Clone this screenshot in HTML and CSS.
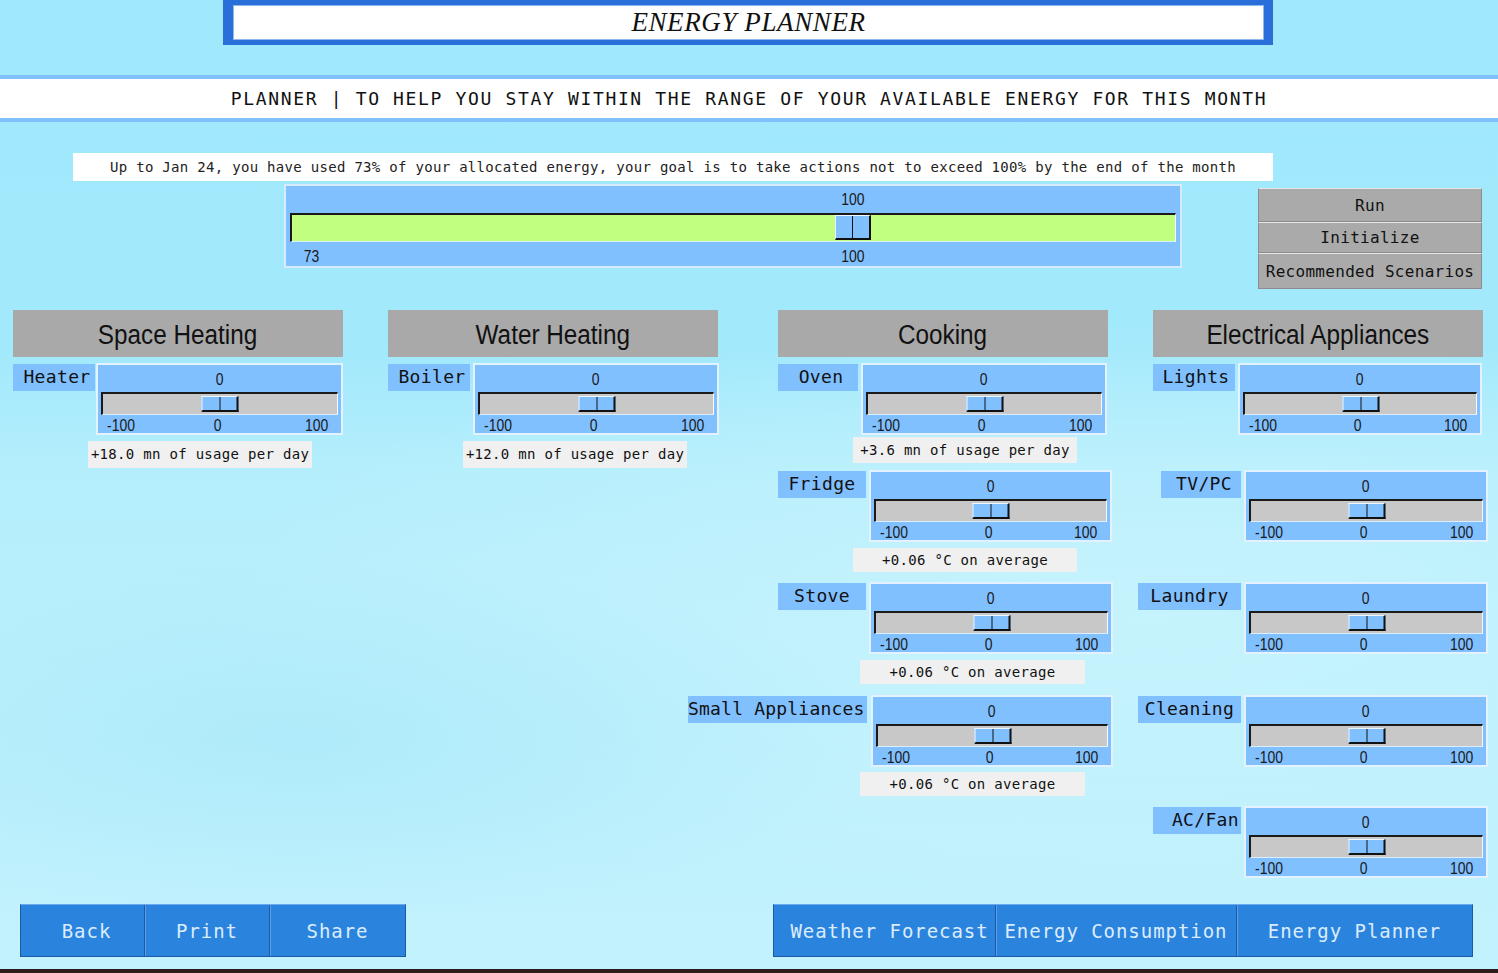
FILE: index.html
```html
<!DOCTYPE html>
<html lang="en">
<head>
<meta charset="utf-8">
<title>Energy Planner</title>
<link rel="stylesheet" href="styles.css">
</head>
<body>
<div class="page">
  <header class="title-frame">
    <div class="title-inner"><h1 class="title">ENERGY PLANNER</h1></div>
  </header>

  <div class="subtitle">PLANNER | TO HELP YOU STAY WITHIN THE RANGE OF YOUR AVAILABLE ENERGY FOR THIS MONTH</div>

  <div class="info">Up to Jan 24, you have used 73% of your allocated energy, your goal is to take actions not to exceed 100% by the end of the month</div>

  <div class="control-row">
    <div class="main-slider">
      <div class="ms-line"><span class="ms-mark" style="left:63.5%"><span class="num">100</span></span></div>
      <div class="track track-main"><span class="thumb thumb-main" style="left:63.5%"></span></div>
      <div class="ms-line ms-scale"><span class="ms-start"><span class="num">73</span></span><span class="ms-mark" style="left:63.5%"><span class="num">100</span></span></div>
    </div>
    <div class="actions">
      <button class="act act-run">Run</button>
      <button class="act act-init">Initialize</button>
      <button class="act act-rec">Recommended Scenarios</button>
    </div>
  </div>

  <div class="categories">
    <section class="cat cat-space">
      <h2 class="cat-head"><span>Space Heating</span></h2>
      <div class="item item-first">
        <div class="row">
          <div class="label lbl-heater">Heater</div>
          <div class="slider w247">
            <div class="s-value"><span class="num">0</span></div>
            <div class="track"><span class="thumb"></span></div>
            <div class="s-scale"><span class="num">-100</span><span class="num">0</span><span class="num">100</span></div>
          </div>
        </div>
        <div class="note note-a">+18.0 mn of usage per day</div>
      </div>
    </section>

    <section class="cat cat-water">
      <h2 class="cat-head"><span>Water Heating</span></h2>
      <div class="item item-first">
        <div class="row">
          <div class="label lbl-boiler">Boiler</div>
          <div class="slider w246">
            <div class="s-value"><span class="num">0</span></div>
            <div class="track"><span class="thumb"></span></div>
            <div class="s-scale"><span class="num">-100</span><span class="num">0</span><span class="num">100</span></div>
          </div>
        </div>
        <div class="note note-a">+12.0 mn of usage per day</div>
      </div>
    </section>

    <section class="cat cat-cook">
      <h2 class="cat-head"><span>Cooking</span></h2>
      <div class="item item-first">
        <div class="row">
          <div class="label lbl-oven">Oven</div>
          <div class="slider w246">
            <div class="s-value"><span class="num">0</span></div>
            <div class="track"><span class="thumb"></span></div>
            <div class="s-scale"><span class="num">-100</span><span class="num">0</span><span class="num">100</span></div>
          </div>
        </div>
        <div class="note note-oven">+3.6 mn of usage per day</div>
      </div>
      <div class="item item-fridge">
        <div class="row">
          <div class="label lbl-fridge">Fridge</div>
          <div class="slider w243">
            <div class="s-value"><span class="num">0</span></div>
            <div class="track"><span class="thumb"></span></div>
            <div class="s-scale"><span class="num">-100</span><span class="num">0</span><span class="num">100</span></div>
          </div>
        </div>
        <div class="note note-fridge">+0.06 °C on average</div>
      </div>
      <div class="item item-stove">
        <div class="row">
          <div class="label lbl-fridge">Stove</div>
          <div class="slider w244">
            <div class="s-value"><span class="num">0</span></div>
            <div class="track"><span class="thumb"></span></div>
            <div class="s-scale"><span class="num">-100</span><span class="num">0</span><span class="num">100</span></div>
          </div>
        </div>
        <div class="note note-stove">+0.06 °C on average</div>
      </div>
      <div class="item item-small">
        <div class="row">
          <div class="label lbl-small">Small Appliances</div>
          <div class="slider w242">
            <div class="s-value"><span class="num">0</span></div>
            <div class="track"><span class="thumb"></span></div>
            <div class="s-scale"><span class="num">-100</span><span class="num">0</span><span class="num">100</span></div>
          </div>
        </div>
        <div class="note note-small">+0.06 °C on average</div>
      </div>
    </section>

    <section class="cat cat-elec">
      <h2 class="cat-head"><span>Electrical Appliances</span></h2>
      <div class="item item-first">
        <div class="row">
          <div class="label lbl-lights">Lights</div>
          <div class="slider w244">
            <div class="s-value"><span class="num">0</span></div>
            <div class="track"><span class="thumb"></span></div>
            <div class="s-scale"><span class="num">-100</span><span class="num">0</span><span class="num">100</span></div>
          </div>
        </div>
      </div>
      <div class="item item-e2">
        <div class="row">
          <div class="label lbl-tv">TV/PC</div>
          <div class="slider w244">
            <div class="s-value"><span class="num">0</span></div>
            <div class="track"><span class="thumb"></span></div>
            <div class="s-scale"><span class="num">-100</span><span class="num">0</span><span class="num">100</span></div>
          </div>
        </div>
      </div>
      <div class="item item-e3">
        <div class="row">
          <div class="label lbl-laundry">Laundry</div>
          <div class="slider w244">
            <div class="s-value"><span class="num">0</span></div>
            <div class="track"><span class="thumb"></span></div>
            <div class="s-scale"><span class="num">-100</span><span class="num">0</span><span class="num">100</span></div>
          </div>
        </div>
      </div>
      <div class="item item-e4">
        <div class="row">
          <div class="label lbl-laundry">Cleaning</div>
          <div class="slider w244">
            <div class="s-value"><span class="num">0</span></div>
            <div class="track"><span class="thumb"></span></div>
            <div class="s-scale"><span class="num">-100</span><span class="num">0</span><span class="num">100</span></div>
          </div>
        </div>
      </div>
      <div class="item item-e5">
        <div class="row">
          <div class="label lbl-ac">AC/Fan</div>
          <div class="slider w244">
            <div class="s-value"><span class="num">0</span></div>
            <div class="track"><span class="thumb"></span></div>
            <div class="s-scale"><span class="num">-100</span><span class="num">0</span><span class="num">100</span></div>
          </div>
        </div>
      </div>
    </section>
  </div>

  <footer class="nav">
    <div class="nav-group nav-left">
      <button class="nav-btn nb-back">Back</button>
      <button class="nav-btn nb-print">Print</button>
      <button class="nav-btn nb-share">Share</button>
    </div>
    <div class="nav-group nav-right">
      <button class="nav-btn nb-weather">Weather Forecast</button>
      <button class="nav-btn nb-cons">Energy Consumption</button>
      <button class="nav-btn nb-plan">Energy Planner</button>
    </div>
  </footer>
  <div class="bottom-rule"></div>
</div>
</body>
</html>
```

FILE: styles.css
```css
* { box-sizing: border-box; }

html, body {
  margin: 0;
  padding: 0;
}

body {
  width: 1498px;
  height: 973px;
  overflow: hidden;
  font-family: "DejaVu Sans Mono", "Liberation Mono", monospace;
  color: #111;
  background:
    radial-gradient(ellipse 760px 240px at 300px 740px, rgba(164, 230, 249, 0.55), rgba(164, 230, 249, 0) 75%),
    radial-gradient(ellipse 1300px 420px at 1150px 620px, rgba(200, 244, 253, 0.85), rgba(200, 244, 253, 0) 72%),
    linear-gradient(180deg, #a0e8fc 0%, #a2e9fc 36%, #b4eefc 48%, #bbf0fc 70%, #c2f2fd 100%);
}

.page {
  width: 1498px;
  height: 973px;
}

/* ---------- title ---------- */
.title-frame {
  margin-left: 223px;
  width: 1050px;
  height: 45px;
  background: #2a6fd9;
  padding: 5px 9px 5px 10px;
}

.title-inner {
  height: 35px;
  background: #fff;
  box-shadow: inset 0 0 0 1px #8fb8ee;
  display: flex;
  align-items: center;
  justify-content: center;
}

.title {
  margin: 0;
  font: italic 400 27px/35px "Liberation Serif", serif;
  letter-spacing: 0.6px;
  color: #111;
}

/* ---------- subtitle ---------- */
.subtitle {
  margin-top: 30px;
  height: 47px;
  border-top: 4px solid #80c0ff;
  border-bottom: 4px solid #80c0ff;
  background: #fff;
  text-align: center;
  font-size: 18px;
  line-height: 39px;
  letter-spacing: 1.65px;
  color: #111;
}

/* ---------- info ---------- */
.info {
  margin: 31px 0 0 73px;
  width: 1200px;
  height: 28px;
  background: #fff;
  text-align: center;
  font-size: 14px;
  line-height: 28px;
  letter-spacing: 0.3px;
  color: #222;
}

/* ---------- numbers (narrow, tall) ---------- */
.num {
  display: inline-block;
  font: 17px/18px "Liberation Sans", Arial, sans-serif;
  color: #1a1a1a;
  transform: scaleX(0.82);
}

/* ---------- main slider + actions ---------- */
.control-row {
  display: flex;
  align-items: flex-start;
  margin-top: 3px;
}

.main-slider {
  margin-left: 284px;
  width: 898px;
  height: 84px;
  border: 2px solid #d6ebff;
  background: #80c0ff;
  padding: 4px 4px 0;
}

.ms-line {
  position: relative;
  height: 20px;
  line-height: 20px;
}

.ms-line .num { line-height: 20px; }

.ms-scale {
  margin-top: 5px;
}

.ms-start {
  position: absolute;
  left: 12px;
  top: 0;
}

.ms-mark {
  position: absolute;
  top: 0;
  transform: translateX(-50%);
}

.track {
  position: relative;
  height: 23px;
  background: #c8c8c8;
  border-top: 2px solid #1a1a1a;
  border-left: 2px solid #1a1a1a;
  border-right: 1px solid #f4faff;
  border-bottom: 1px solid #dcefff;
}

.track-main {
  height: 29px;
  margin-top: 3px;
  background: #c0ff80;
}

.thumb {
  position: absolute;
  left: 50%;
  top: 2px;
  width: 37px;
  height: 16px;
  transform: translateX(-50%);
  background: #80c0ff;
  border-top: 1px solid #f0f8ff;
  border-left: 1px solid #f0f8ff;
  border-right: 2px solid #111;
  border-bottom: 2px solid #111;
}

.thumb::after {
  content: "";
  position: absolute;
  left: 50%;
  top: 0;
  bottom: 0;
  width: 1px;
  background: #111;
}

.thumb-main {
  top: 0;
  width: 36px;
  height: 25px;
}

.actions {
  margin: 4px 0 0 76px;
  width: 224px;
  display: flex;
  flex-direction: column;
}

.act {
  display: block;
  width: 100%;
  margin: 0;
  padding: 0;
  background: #aaaaaa;
  border: 1px solid #8c8c8c;
  border-top: 1px solid #e6e6e6;
  font-family: "DejaVu Sans Mono", monospace;
  font-size: 16px;
  letter-spacing: 0.3px;
  color: #111;
  text-align: center;
}

.act-run { height: 34px; }
.act-init { height: 31px; }
.act-rec { height: 36px; }

/* ---------- categories ---------- */
.categories {
  display: flex;
  align-items: flex-start;
  margin-top: 21px;
  padding-left: 13px;
}

.cat {
  width: 330px;
  display: flex;
  flex-direction: column;
}

.cat-water { margin-left: 45px; }
.cat-cook { margin-left: 60px; }
.cat-elec { margin-left: 45px; }

.cat-head {
  margin: 0;
  height: 47px;
  padding-top: 3px;
  background: #a9a9a9;
  text-align: center;
  font: 400 27px/44px "Liberation Sans", Arial, sans-serif;
  color: #111;
}

.cat-head span {
  display: inline-block;
  transform: scaleX(0.9);
}

.item-first { margin-top: 6px; }
.item-fridge { margin-top: 7px; }
.item-stove { margin-top: 10px; }
.item-small { margin-top: 11px; }
.item-e2 { margin-top: 35px; }
.item-e3 { margin-top: 40px; }
.item-e4 { margin-top: 41px; }
.item-e5 { margin-top: 39px; }

.row {
  display: flex;
  align-items: flex-start;
  gap: 3px;
}

.label {
  flex: none;
  margin-top: 1px;
  height: 27px;
  background: #80c0ff;
  font-size: 18px;
  line-height: 26px;
  letter-spacing: 0.35px;
  text-align: center;
  color: #111;
  white-space: nowrap;
}

.lbl-heater { width: 82px; padding-left: 6px; margin-right: -2px; }
.lbl-boiler { width: 82px; padding-left: 6px; }
.lbl-oven { width: 80px; padding-left: 6px; }
.lbl-fridge { width: 88px; }
.lbl-small { width: 179px; margin-left: -90px; margin-right: 1px; text-align: left; letter-spacing: 0.2px; }
.lbl-lights { width: 82px; padding-left: 4px; }
.lbl-tv { width: 80px; margin-left: 8px; padding-left: 6px; }
.lbl-laundry { width: 103px; margin-left: -15px; }
.lbl-ac { width: 88px; text-align: right; padding-right: 2px; }

.slider {
  flex: none;
  height: 72px;
  border: 2px solid #e4f2ff;
  background: #80c0ff;
  padding: 5px 3px 0;
}

.w247 { width: 247px; }
.w246 { width: 246px; }
.w244 { width: 244px; }
.w243 { width: 243px; }
.w242 { width: 242px; }

.s-value {
  height: 20px;
  margin-bottom: 2px;
  text-align: center;
  line-height: 20px;
}

.s-value .num { line-height: 20px; }

.s-scale {
  display: grid;
  grid-template-columns: 1fr auto 1fr;
  padding: 3px 10px 0 6px;
}

.s-scale .num { line-height: 16px; }
.s-scale .num:first-child { justify-self: start; transform-origin: left center; }
.s-scale .num:nth-child(2) { transform-origin: center; }
.s-scale .num:last-child { justify-self: end; transform-origin: right center; }

.note {
  background: #f0f0f0;
  font-size: 14px;
  letter-spacing: 0.3px;
  text-align: center;
  color: #111;
  white-space: nowrap;
}

.note-a { margin: 6px 0 0 75px; width: 224px; height: 27px; line-height: 27px; }
.note-oven { margin: 2px 0 0 75px; width: 224px; height: 26px; line-height: 26px; }
.note-fridge { margin: 6px 0 0 75px; width: 224px; height: 24px; line-height: 24px; }
.note-stove { margin: 6px 0 0 82px; width: 225px; height: 24px; line-height: 24px; }
.note-small { margin: 5px 0 0 82px; width: 225px; height: 24px; line-height: 24px; }

/* ---------- footer nav ---------- */
.nav {
  display: flex;
  margin-top: 26px;
  padding-left: 20px;
}

.nav-group {
  display: flex;
  height: 53px;
  border: 1px solid #1c5aa6;
  border-top-color: #6aa8ee;
  background: #2a84de;
}

.nav-right { margin-left: 367px; }

.nav-btn {
  margin: 0;
  padding: 0;
  height: 51px;
  background: #2a84de;
  border: 0;
  border-right: 1px solid #1c5aa6;
  box-shadow: inset 1px 0 0 #5a9fe8;
  font-family: "DejaVu Sans Mono", monospace;
  font-size: 19px;
  letter-spacing: 0.95px;
  color: #dcecff;
  text-align: center;
}

.nav-btn:first-child { box-shadow: none; }
.nav-btn:last-child { border-right: 0; }

.nb-back { width: 124px; padding-left: 8px; }
.nb-print { width: 125px; }
.nb-share { width: 135px; }
.nb-weather { width: 222px; padding-left: 10px; }
.nb-cons { width: 241px; }
.nb-plan { width: 235px; }

.bottom-rule {
  margin-top: 12px;
  height: 4px;
  background: #2e1c1c;
}
```
